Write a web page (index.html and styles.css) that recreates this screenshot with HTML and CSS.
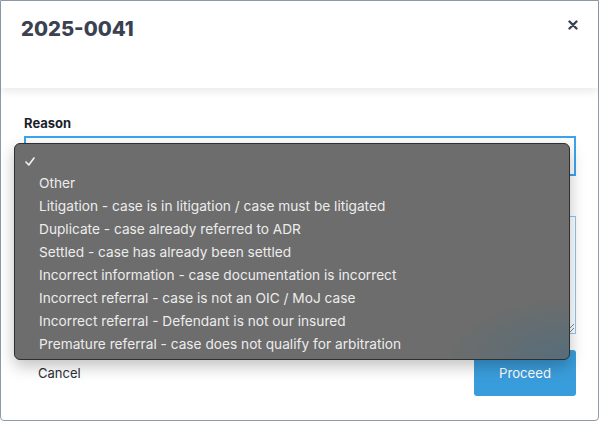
FILE: index.html
```html
<!DOCTYPE html>
<html>
<head>
<meta charset="utf-8">
<link rel="stylesheet" href="styles.css">
</head>
<body>
<div class="modal">
  <div class="modal-header">
    <h1 class="title">2025-0041</h1>
    <button class="close" aria-label="Close">
      <svg width="10" height="10" viewBox="0 0 10 10"><path d="M1.5 1.5 L8.5 8.5 M8.5 1.5 L1.5 8.5" stroke="#3a4150" stroke-width="2.4" stroke-linecap="round"/></svg>
    </button>
  </div>
  <div class="modal-body">
    <label class="label">Reason</label>
    <div class="select"></div>
    <div class="textarea"><span class="grip"></span></div>
  </div>
  <div class="modal-footer">
    <button class="btn-cancel">Cancel</button>
    <button class="btn-proceed">Proceed</button>
  </div>
  <ul class="menu">
    <li class="opt checked"><svg class="check" width="10" height="9" viewBox="0 0 10 9"><path d="M1 5 L3.8 8 L9 1" fill="none" stroke="#f2f2f2" stroke-width="1.6" stroke-linecap="round" stroke-linejoin="round"/></svg></li>
    <li class="opt">Other</li>
    <li class="opt">Litigation - case is in litigation / case must be litigated</li>
    <li class="opt">Duplicate - case already referred to ADR</li>
    <li class="opt">Settled - case has already been settled</li>
    <li class="opt">Incorrect information - case documentation is incorrect</li>
    <li class="opt">Incorrect referral - case is not an OIC / MoJ case</li>
    <li class="opt">Incorrect referral - Defendant is not our insured</li>
    <li class="opt">Premature referral - case does not qualify for arbitration</li>
  </ul>
</div>
</body>
</html>
```

FILE: styles.css
```css
* { box-sizing: border-box; }
html, body { margin: 0; padding: 0; background: #ffffff; }
body { width: 599px; height: 421px; overflow: hidden; font-family: Inter, "Open Sans", "Liberation Sans", sans-serif; }
.modal {
  position: relative;
  width: 599px;
  height: 421px;
  border: 1px solid #8e9ba6;
  border-radius: 0 0 4px 4px;
  background: #fff;
  display: flex;
  flex-direction: column;
}
.modal-header {
  height: 87px;
  display: flex;
  justify-content: space-between;
  align-items: flex-start;
  padding: 14px 19px 0 20px;
  box-shadow: 0 4px 8px rgba(0,0,0,0.08);
  position: relative;
  z-index: 1;
}
.title {
  margin: 0;
  font-family: Inter, "Open Sans", sans-serif;
  font-weight: 800;
  font-size: 20.3px;
  color: #3a4150;
  line-height: 28px;
}
.close {
  border: 0; background: none; padding: 0; margin-top: 4px;
  width: 12px; height: 12px; display: flex; align-items: center; justify-content: center;
}
.modal-body {
  padding: 27px 22px 0 23px;
  display: flex;
  flex-direction: column;
}
.label {
  font-family: Inter, "Open Sans", sans-serif;
  font-weight: 700;
  font-size: 13px;
  color: #1b1f2a;
  line-height: 16px;
  margin-bottom: 5px;
}
.select {
  height: 40px;
  border: 2px solid #3ea3ee;
  background: #fff;
}
.textarea {
  margin-top: 40px;
  height: 118px;
  border: 1px solid #8dc6f0;
  position: relative;
}
.grip {
  position: absolute; right: 1px; bottom: 1px; width: 8px; height: 8px;
  background: linear-gradient(135deg, transparent 45%, #888 45%, #888 55%, transparent 55%, transparent 70%, #888 70%, #888 80%, transparent 80%);
}
.modal-footer {
  display: flex;
  justify-content: space-between;
  align-items: center;
  padding: 16px 22px 0 37px;
}
.btn-cancel {
  border: 0; background: none; padding: 0;
  font-family: Inter, "Open Sans", sans-serif;
  font-size: 13px; color: #2d2f33;
}
.btn-proceed {
  width: 102px; height: 46px;
  border: 0; border-radius: 3px;
  background: #3a9ddb; color: #fff;
  font-family: Inter, "Open Sans", sans-serif;
  font-size: 13.2px;
}
.menu {
  position: absolute;
  left: 13px; top: 142px;
  width: 556px; height: 217px;
  margin: 0; padding: 5px 0 0 0;
  list-style: none;
  background: #6c6d6c;
  background-image: radial-gradient(ellipse 120px 60px at 100% 100%, rgba(60,110,140,0.45), transparent);
  border: 1px solid #2e2f30;
  border-radius: 6px;
  box-shadow: 0 6px 16px rgba(0,0,0,0.25);
  z-index: 5;
}
.opt {
  height: 23px;
  line-height: 23px;
  padding-left: 24px;
  font-family: Inter, "Open Sans", sans-serif;
  font-size: 13.7px;
  color: #ececec;
  white-space: nowrap;
  position: relative;
}
.check {
  position: absolute; left: 10px; top: 8px;
}
```
